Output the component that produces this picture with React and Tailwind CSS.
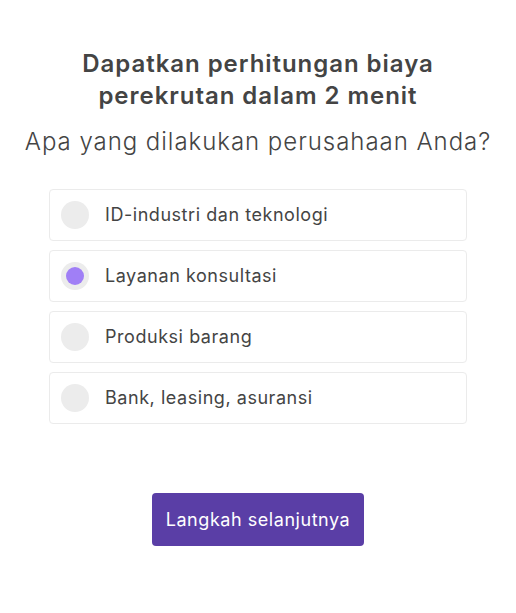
import { useState } from "react";

const options = [
  "ID-industri dan teknologi",
  "Layanan konsultasi",
  "Produksi barang",
  "Bank, leasing, asuransi",
];

export default function App() {
  const [selected, setSelected] = useState(1);

  return (
    <div className="min-h-screen bg-white font-[Inter,sans-serif] tracking-[0.034em] text-[#444]">
      <div className="mx-auto flex w-[418px] flex-col items-center pt-12">
        <h1 className="text-center text-[24px] font-semibold leading-8 tracking-[0.04em] text-[#444]">
          Dapatkan perhitungan biaya
          <br />
          perekrutan dalam 2 menit
        </h1>
        <p className="mt-[14px] whitespace-nowrap text-[24px] font-light leading-8 tracking-[0.04em] text-[#444]">
          Apa yang dilakukan perusahaan Anda?
        </p>

        <div className="mt-[31px] flex w-full flex-col gap-[9px]">
          {options.map((label, i) => (
            <button
              key={label}
              onClick={() => setSelected(i)}
              className="flex h-[52px] w-full items-center gap-4 rounded-[4px] border border-[#ebebeb] bg-white pl-[11px] text-left"
            >
              <span className="flex h-7 w-7 shrink-0 items-center justify-center rounded-full bg-[#ececec]">
                {selected === i && (
                  <span className="h-[18px] w-[18px] rounded-full bg-[#a07ff6]" />
                )}
              </span>
              <span className="text-[18px] leading-6 text-[#444]">{label}</span>
            </button>
          ))}
        </div>

        <button className="mt-[69px] h-[53px] rounded-[4px] bg-[#5a3ea6] px-[14px] text-[18px] text-white">
          Langkah selanjutnya
        </button>
      </div>
    </div>
  );
}
